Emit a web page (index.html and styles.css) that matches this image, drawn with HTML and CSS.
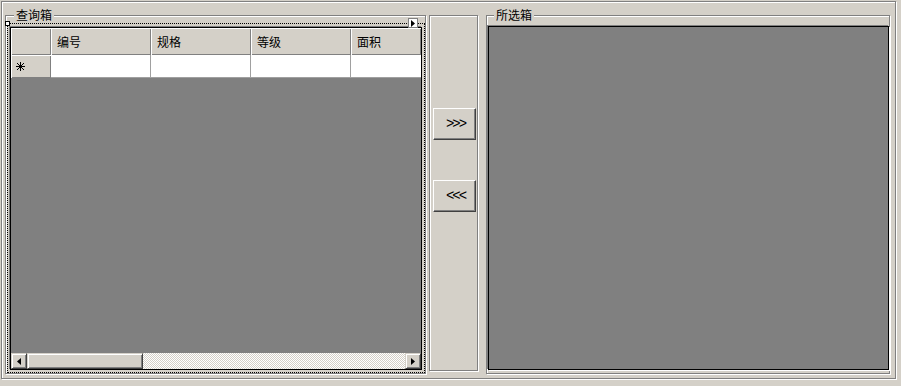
FILE: index.html
```html
<!DOCTYPE html>
<html>
<head>
<meta charset="utf-8">
<link rel="stylesheet" href="styles.css">
</head>
<body>
<div class="frame">
  <div class="group group-query">
    <span class="legend">查询箱</span>
    <div class="grid">
      <div class="grid-head">
        <div class="hcell rowhead"></div>
        <div class="hcell col">编号</div>
        <div class="hcell col">规格</div>
        <div class="hcell col">等级</div>
        <div class="hcell col last">面积</div>
      </div>
      <div class="grid-row">
        <div class="hcell rowhead star">
          <svg width="9" height="9" viewBox="0 0 9 9"><path d="M4.5 0V9M0 4.5H9M1 1L8 8M8 1L1 8" stroke="#000" stroke-width="1" fill="none"/></svg>
        </div>
        <div class="rcell col"></div>
        <div class="rcell col"></div>
        <div class="rcell col"></div>
        <div class="rcell col last"></div>
      </div>
      <div class="grid-fill"></div>
      <div class="hscroll">
        <div class="sbtn"><svg width="4" height="7" viewBox="0 0 4 7"><path d="M4 0V7L0 3.5Z" fill="#000"/></svg></div>
        <div class="thumb"></div>
        <div class="track"></div>
        <div class="sbtn"><svg width="4" height="7" viewBox="0 0 4 7"><path d="M0 0V7L4 3.5Z" fill="#000"/></svg></div>
      </div>
    </div>
  </div>
  <div class="group group-mid">
    <button class="xfer">&gt;&gt;&gt;</button>
    <button class="xfer">&lt;&lt;&lt;</button>
  </div>
  <div class="group group-sel">
    <span class="legend">所选箱</span>
    <div class="panel"></div>
  </div>
</div>
<div class="selection"></div>
<div class="handle"></div>
<div class="smarttag"><svg width="4" height="7" viewBox="0 0 4 7"><path d="M0 0V7L4 3.5Z" fill="#000"/></svg></div>
</body>
</html>
```
FILE: styles.css
```css
* { box-sizing: border-box; }
html, body { margin: 0; padding: 0; }
body {
  position: relative;
  width: 901px;
  height: 386px;
  background: #d4d0c8;
  font-family: "Noto Sans CJK SC", "Liberation Sans", sans-serif;
  font-size: 12px;
  color: #000;
  overflow: hidden;
}
.frame {
  margin: 1px 0 0 1px;
  width: 895px;
  height: 378px;
  border: 1px solid #808080;
  box-shadow: inset 1px 1px 0 #fff, 1px 1px 0 #fff;
  padding: 13px 0 0 3px;
  display: flex;
  align-items: flex-start;
}
.group {
  position: relative;
  border: 1px solid #808080;
  box-shadow: inset 1px 1px 0 #fff, 1px 1px 0 #fff;
}
.legend {
  position: absolute;
  top: -8px;
  left: 8px;
  padding: 0 2px;
  line-height: 14px;
  background: #d4d0c8;
}
.group-query {
  width: 421px;
  height: 359px;
  padding: 11px 0 0 4px;
}
.group-mid {
  margin-left: 3px;
  width: 49px;
  height: 356px;
  padding: 92px 0 0 3px;
  display: flex;
  flex-direction: column;
  gap: 40px;
}
.group-sel {
  margin-left: 8px;
  width: 404px;
  height: 359px;
  padding: 10px 0 0 1px;
}
.group-sel .legend { left: 7px; }

.grid {
  width: 412px;
  height: 343px;
  border: 1px solid #000;
  box-shadow: -1px -1px 0 #808080;
  background: #808080;
  display: flex;
  flex-direction: column;
  overflow: hidden;
}
.grid-head, .grid-row { display: flex; flex: none; }
.grid-head { height: 27px; }
.grid-row { height: 23px; }
.hcell {
  background: #d4d0c8;
  box-shadow: inset 1px 1px 0 #fff, inset -1px -1px 0 #808080;
  padding: 0 6px;
  display: flex;
  align-items: center;
  line-height: 14px;
}
.rowhead { width: 40px; flex: none; }
.col { width: 100px; flex: none; }
.col.last { flex: 1; width: auto; min-width: 0; }
.star { padding-left: 5px; }
.star svg { display: block; }
.rcell {
  background: #fff;
  border-right: 1px solid #a0a0a0;
  border-bottom: 1px solid #a0a0a0;
}
.rcell.last { border-right: none; }
.grid-fill { flex: 1; }
.hscroll {
  flex: none;
  height: 16px;
  display: flex;
}
.sbtn, .thumb {
  background: #d4d0c8;
  border: 1px solid;
  border-color: #d4d0c8 #404040 #404040 #d4d0c8;
  box-shadow: inset 1px 1px 0 #fff, inset -1px -1px 0 #808080;
}
.sbtn {
  width: 16px;
  flex: none;
  display: flex;
  align-items: center;
  justify-content: center;
}
.sbtn svg { display: block; }
.thumb { width: 116px; flex: none; }
.track {
  flex: 1;
  background: repeating-conic-gradient(#fff 0 25%, #d4d0c8 0 50%) 0 0 / 2px 2px;
}

.xfer {
  width: 43px;
  height: 32px;
  margin: 0;
  padding: 0 0 1px 2px;
  background: #d4d0c8;
  border: 1px solid;
  border-color: #fff #404040 #404040 #fff;
  box-shadow: inset -1px -1px 0 #808080;
  font-family: "Liberation Mono", monospace;
  font-size: 14px;
  letter-spacing: -2px;
  color: #000;
  line-height: 16px;
  flex: none;
}

.panel {
  width: 401px;
  height: 344px;
  background: #808080;
  border: 1px solid #000;
  box-shadow: -1px -1px 0 #808080, 1px 1px 0 #fff;
}

.selection {
  position: absolute;
  left: 7px;
  top: 23px;
  width: 418px;
  height: 350px;
  border: 1px dotted #000;
}
.handle {
  position: absolute;
  left: 5px;
  top: 21px;
  width: 5px;
  height: 5px;
  background: #fff;
  border: 1px solid #000;
}
.smarttag {
  position: absolute;
  left: 408px;
  top: 18px;
  width: 10px;
  height: 10px;
  background: #fff;
  border: 1px solid #808080;
  display: flex;
  align-items: center;
  justify-content: center;
}
.smarttag svg { display: block; }
```
